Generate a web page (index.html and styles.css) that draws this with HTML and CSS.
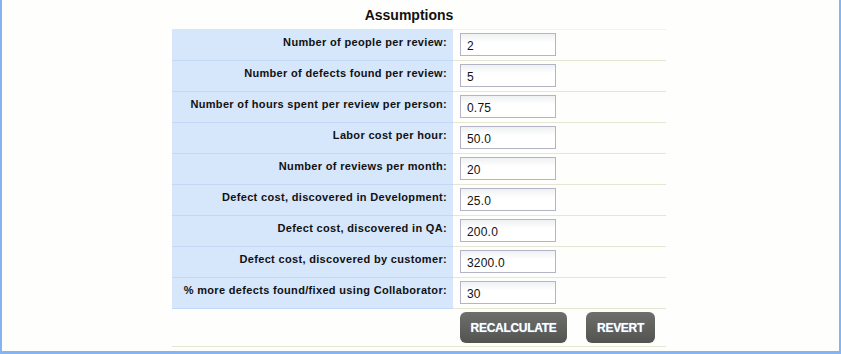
FILE: index.html
```html
<!DOCTYPE html>
<html>
<head>
    <title>Assumptions</title>
    <link rel="stylesheet" href="styles.css">
</head>
<body>
    <div class="frame">
        <h2 class="title">Assumptions</h2>
        <table class="assumptions">
            <tr>
                <td class="label">Number of people per review:</td>
                <td class="field"><input type="text" value="2"></td>
            </tr>
            <tr>
                <td class="label">Number of defects found per review:</td>
                <td class="field"><input type="text" value="5"></td>
            </tr>
            <tr>
                <td class="label">Number of hours spent per review per person:</td>
                <td class="field"><input type="text" value="0.75"></td>
            </tr>
            <tr>
                <td class="label">Labor cost per hour:</td>
                <td class="field"><input type="text" value="50.0"></td>
            </tr>
            <tr>
                <td class="label">Number of reviews per month:</td>
                <td class="field"><input type="text" value="20"></td>
            </tr>
            <tr>
                <td class="label">Defect cost, discovered in Development:</td>
                <td class="field"><input type="text" value="25.0"></td>
            </tr>
            <tr>
                <td class="label">Defect cost, discovered in QA:</td>
                <td class="field"><input type="text" value="200.0"></td>
            </tr>
            <tr>
                <td class="label">Defect cost, discovered by customer:</td>
                <td class="field"><input type="text" value="3200.0"></td>
            </tr>
            <tr>
                <td class="label">% more defects found/fixed using Collaborator:</td>
                <td class="field"><input type="text" value="30"></td>
            </tr>
            <tr class="actions">
                <td></td>
                <td>
                    <div class="buttons">
                        <button type="button" class="btn btn-recalc">RECALCULATE</button>
                        <button type="button" class="btn btn-revert">REVERT</button>
                    </div>
                </td>
            </tr>
        </table>
    </div>
</body>
</html>
```

FILE: styles.css
```css
body {
    margin: 0;
    font-family: Tahoma, 'Liberation Sans', Arial, sans-serif;
    background-color: #fefefc;
}
.frame {
    box-sizing: border-box;
    width: 841px;
    height: 354px;
    border-left: 2px solid #86b3f2;
    border-right: 2px solid #86b3f2;
    border-bottom: 3px solid #86b3f2;
    background-color: #fefefc;
}
.title {
    margin: 0;
    height: 29px;
    line-height: 30px;
    font-size: 14px;
    font-weight: bold;
    color: #111;
    text-align: center;
    padding-right: 23px;
}
.assumptions {
    margin-left: 170px;
    width: 494px;
    border-collapse: collapse;
}
.assumptions td {
    padding: 0;
}
.label {
    width: 281px;
    height: 30px;
    padding-right: 6px !important;
    box-sizing: border-box;
    background-color: #d6e6fb;
    border-bottom: 1px solid #c2d8f6;
    text-align: right;
    font-size: 11px;
    font-weight: bold;
    letter-spacing: 0.33px;
    color: #111;
    vertical-align: top;
    line-height: 24px;
}
.field {
    height: 30px;
    padding-left: 7px !important;
    border-bottom: 1px solid #e6e6d2;
    vertical-align: top;
}
.assumptions tr:first-child .field {
    border-top: 1px solid #f2f2ef;
}
.assumptions tr:first-child .label {
    border-top: 1px solid #d6e6fb;
}
.field input {
    box-sizing: border-box;
    width: 96px;
    height: 23px;
    margin-top: 3px;
    padding: 3px 0 0 6px;
    border: 1px solid #b3b5c6;
    background: linear-gradient(#eef0f2, #ffffff 40%);
    font-family: Tahoma, 'Liberation Sans', Arial, sans-serif;
    font-size: 12px;
    letter-spacing: 0.2px;
    color: #111;
}
.actions td {
    height: 37px;
    border-bottom: 1px solid #e6e6d2;
    vertical-align: top;
}
.buttons {
    display: flex;
    gap: 19px;
    padding: 3px 0 0 7px;
}
.btn {
    height: 31px;
    border: none;
    border-radius: 6px;
    background: linear-gradient(#6e6e6a, #535350);
    color: #fff;
    font-family: Tahoma, 'Liberation Sans', Arial, sans-serif;
    font-size: 12px;
    font-weight: bold;
    letter-spacing: -0.3px;
    text-shadow: 0 0 1px #9ec8f5;
    padding: 0;
}
.btn-recalc {
    width: 107px;
}
.btn-revert {
    width: 69px;
}
```
